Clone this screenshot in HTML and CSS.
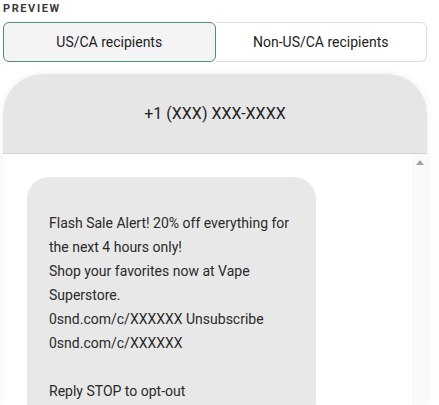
FILE: index.html
```html
<!DOCTYPE html>
<html lang="en">
<head>
<meta charset="utf-8">
<title>Preview</title>
<link rel="stylesheet" href="styles.css">
</head>
<body>
<div class="preview">
  <div class="label">PREVIEW</div>
  <div class="segmented">
    <button class="seg seg-active">US/CA recipients</button>
    <button class="seg seg-right">Non-US/CA recipients</button>
  </div>
  <div class="phone">
    <div class="phone-header">+1 (XXX) XXX-XXXX</div>
    <div class="phone-body">
      <div class="messages">
        <div class="bubble">Flash Sale Alert! 20% off everything for the next 4 hours only!
Shop your favorites now at Vape Superstore.
0snd.com/c/XXXXXX Unsubscribe 0snd.com/c/XXXXXX

Reply STOP to opt-out</div>
      </div>
      <div class="scrollbar"><span class="arrow"></span></div>
    </div>
  </div>
</div>
</body>
</html>
```
FILE: styles.css
```css
html, body {
  margin: 0;
  padding: 0;
  overflow: hidden;
  background: #ffffff;
}
body {
  font-family: Roboto, "Liberation Sans", Arial, sans-serif;
  color: #222222;
}
.preview {
  width: 424px;
  padding-left: 3px;
}
.label {
  font-size: 11px;
  font-weight: 700;
  letter-spacing: 1.6px;
  line-height: 18px;
  color: #3a3a3a;
  margin-bottom: 4px;
}
.segmented {
  display: flex;
  height: 40px;
}
.seg {
  flex: 1 1 0;
  font-family: inherit;
  font-size: 14px;
  color: #222222;
  background: #ffffff;
  border: 1px solid #dcdcdc;
  border-radius: 6px;
  padding: 0;
  margin: 0;
}
.seg-active {
  background: #f4f4f4;
  border-color: #4e8c80;
  position: relative;
  z-index: 1;
}
.seg-right {
  border-left: none;
  border-radius: 0 6px 6px 0;
}
.phone {
  margin-top: 12px;
  border-radius: 40px 40px 0 0;
  box-shadow: 0 0 7px rgba(0, 0, 0, 0.07);
  overflow: hidden;
  background: #ffffff;
}
.phone-header {
  height: 79px;
  background: #e6e6e6;
  border-bottom: 1px solid #d2d2d2;
  display: flex;
  align-items: center;
  justify-content: center;
  font-size: 16px;
  color: #222222;
}
.phone-body {
  display: flex;
  height: 251px;
}
.messages {
  flex: 1;
  padding: 23px 0 0 24px;
  overflow: hidden;
}
.bubble {
  width: 245px;
  background: #e8e8e8;
  border-radius: 22px;
  padding: 34px 22px 20px 22px;
  font-size: 14px;
  line-height: 24px;
  color: #2a2a2a;
  white-space: pre-line;
}
.scrollbar {
  width: 15px;
  background: #fafafa;
  display: flex;
  justify-content: center;
}
.arrow {
  width: 0;
  height: 0;
  margin-top: 6px;
  border-left: 4.5px solid transparent;
  border-right: 4.5px solid transparent;
  border-bottom: 5px solid #a3a3a3;
}
```
